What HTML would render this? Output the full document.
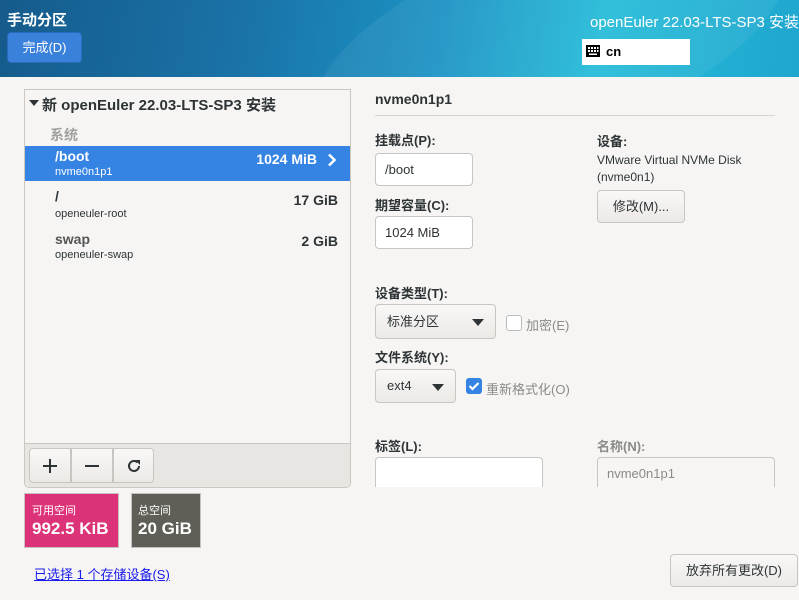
<!DOCTYPE html>
<html><head><meta charset="utf-8"><style>
*{box-sizing:border-box;margin:0;padding:0}
body{width:799px;height:600px;overflow:hidden;background:#f6f5f4;font-family:"Liberation Sans","Noto Sans CJK SC",sans-serif;color:#2e3436;position:relative;font-size:13px}
.a{position:absolute}
#hdr{left:0;top:0;width:799px;height:77px;background:linear-gradient(100deg,#155b8c 0%,#1a72a6 30%,#1c93c4 55%,#25bcd8 75%,#1fa6cf 100%);overflow:hidden}
.btn{position:absolute;border:1px solid #c9c5c0;border-radius:4px;background:linear-gradient(#f9f8f7,#ece9e6);font-size:13px;text-align:center;color:#2e3436}
.inp{position:absolute;border:1px solid #c9c5c0;border-radius:4px;background:#fff;font-size:13px;padding-left:9px}
.lbl{position:absolute;font-weight:bold;font-size:13px}
.tri{display:inline-block;width:0;height:0;border-left:6px solid transparent;border-right:6px solid transparent;border-top:7px solid #2e3436;position:absolute}
</style></head><body>
<div id="hdr" class="a">
  <div class="a" style="left:300px;top:-60px;width:500px;height:200px;border-radius:50%;background:rgba(255,255,255,0.06);transform:rotate(-20deg)"></div>
  <div class="a" style="left:7px;top:9px;color:#fff;font-weight:bold;font-size:15px">手动分区</div>
  <div class="a" style="left:7px;top:32px;width:75px;height:31px;background:#3a81db;border:1px solid #2a6bc0;border-radius:4px;color:#fff;font-size:13px;text-align:center;line-height:30px">完成(D)</div>
  <div class="a" style="right:0;top:11px;color:#fff;font-size:15px;white-space:nowrap">openEuler 22.03-LTS-SP3 安装</div>
  <div class="a" style="left:582px;top:39px;width:108px;height:26px;background:#fff">
    <svg class="a" style="left:4px;top:6px" width="14" height="12" viewBox="0 0 14 12"><rect x="0" y="0" width="14" height="12" fill="#000"/><g fill="#fff"><rect x="2" y="2" width="2" height="2"/><rect x="5" y="2" width="2" height="2"/><rect x="8" y="2" width="2" height="2"/><rect x="11" y="2" width="1.5" height="2"/><rect x="2" y="5" width="2" height="2"/><rect x="5" y="5" width="2" height="2"/><rect x="8" y="5" width="2" height="2"/><rect x="11" y="5" width="1.5" height="2"/><rect x="3" y="8.5" width="8" height="1.5"/></g></svg>
    <div class="a" style="left:24px;top:5px;font-weight:bold;font-size:13px;color:#000">cn</div>
  </div>
</div>

<div class="a" style="left:24px;top:89px;width:327px;height:399px;border:1px solid #cdc7c2;border-radius:0 0 5px 5px;background:#f6f5f4;overflow:hidden">
  <div class="tri" style="left:4px;top:10px;border-width:6px 5px 0 5px"></div>
  <div class="a" style="left:17px;top:4px;font-weight:bold;font-size:15px;white-space:nowrap">新 openEuler 22.03-LTS-SP3 安装</div>
  <div class="a" style="left:25px;top:35px;font-weight:bold;font-size:14px;color:#a0a09c">系统</div>
  <div class="a" style="left:0;top:56px;width:325px;height:35px;background:#3584e4;color:#fff">
    <div class="a" style="left:30px;top:2px;font-weight:bold;font-size:14px">/boot</div>
    <div class="a" style="left:30px;top:20px;font-size:11px">nvme0n1p1</div>
    <div class="a" style="right:33px;top:5px;font-weight:bold;font-size:14px">1024 MiB</div>
    <svg class="a" style="left:302px;top:7px" width="10" height="14" viewBox="0 0 10 14"><path d="M2 1.5 L7.5 7 L2 12.5" stroke="#fff" stroke-width="2.6" fill="none"/></svg>
  </div>
  <div class="a" style="left:30px;top:98px;font-weight:bold;font-size:14px">/</div>
  <div class="a" style="left:30px;top:118px;font-size:11px">openeuler-root</div>
  <div class="a" style="right:12px;top:102px;font-weight:bold;font-size:14px">17 GiB</div>
  <div class="a" style="left:30px;top:141px;font-weight:bold;font-size:14px;color:#555">swap</div>
  <div class="a" style="left:30px;top:159px;font-size:11px">openeuler-swap</div>
  <div class="a" style="right:12px;top:143px;font-weight:bold;font-size:14px">2 GiB</div>
  <div class="a" style="left:0;top:353px;width:325px;height:45px;background:#e8e6e3;border-top:1px solid #cdc7c2">
    <div class="btn" style="left:4px;top:4px;width:42px;height:35px;border-radius:4px 0 0 4px">
      <svg class="a" style="left:12px;top:9px" width="16" height="16"><path d="M8 1V15M1 8H15" stroke="#2e3436" stroke-width="2"/></svg></div>
    <div class="btn" style="left:46px;top:4px;width:42px;height:35px;border-radius:0">
      <svg class="a" style="left:12px;top:9px" width="16" height="16"><path d="M1 8H15" stroke="#2e3436" stroke-width="2"/></svg></div>
    <div class="btn" style="left:88px;top:4px;width:41px;height:35px;border-radius:0 4px 4px 0">
      <svg class="a" style="left:12px;top:9px" width="16" height="16" viewBox="0 0 16 16"><path d="M13 8A5 5 0 1 1 11.5 4.4" stroke="#2e3436" stroke-width="2" fill="none"/><path d="M9 2H14V7Z" fill="#2e3436"/></svg></div>
  </div>
</div>

<div class="a" style="left:24px;top:493px;width:95px;height:55px;background:#dc3278;border:1px solid #c8c0c0;color:#fff">
  <div class="a" style="left:7px;top:8px;font-size:11px">可用空间</div>
  <div class="a" style="left:7px;top:25px;font-size:17px;font-weight:bold;white-space:nowrap">992.5 KiB</div>
</div>
<div class="a" style="left:131px;top:493px;width:70px;height:55px;background:#5f5f58;border:1px solid #c8c0c0;color:#fff">
  <div class="a" style="left:6px;top:8px;font-size:11px">总空间</div>
  <div class="a" style="left:6px;top:25px;font-size:17px;font-weight:bold">20 GiB</div>
</div>
<div class="a" style="left:34px;top:564px;font-size:13px;color:#1a1aee;text-decoration:underline">已选择 1 个存储设备(S)</div>

<div class="a" style="left:375px;top:91px;font-weight:bold;font-size:14px">nvme0n1p1</div>
<div class="a" style="left:375px;top:115px;width:400px;height:1px;background:#d8d4d0"></div>
<div class="lbl" style="left:375px;top:130px">挂载点(P):</div>
<div class="inp" style="left:375px;top:153px;width:98px;height:33px;line-height:31px">/boot</div>
<div class="lbl" style="left:375px;top:195px">期望容量(C):</div>
<div class="inp" style="left:375px;top:216px;width:98px;height:33px;line-height:31px">1024 MiB</div>
<div class="lbl" style="left:597px;top:131px">设备:</div>
<div class="a" style="left:597px;top:153px;font-size:12px">VMware Virtual NVMe Disk</div>
<div class="a" style="left:597px;top:170px;font-size:12px">(nvme0n1)</div>
<div class="btn" style="left:597px;top:190px;width:88px;height:33px;line-height:31px">修改(M)...</div>

<div class="lbl" style="left:375px;top:283px">设备类型(T):</div>
<div class="btn" style="left:375px;top:304px;width:121px;height:35px;text-align:left;padding-left:11px;line-height:33px">标准分区<span class="tri" style="left:96px;top:14px"></span></div>
<div class="a" style="left:506px;top:315px;width:16px;height:16px;border:1px solid #bbb;border-radius:3px;background:#fff"></div>
<div class="a" style="left:526px;top:315px;font-size:13px;color:#8a8a86">加密(E)</div>
<div class="lbl" style="left:375px;top:347px">文件系统(Y):</div>
<div class="btn" style="left:375px;top:369px;width:81px;height:34px;text-align:left;padding-left:11px;line-height:32px">ext4<span class="tri" style="left:56px;top:14px"></span></div>
<div class="a" style="left:466px;top:378px;width:16px;height:16px;border-radius:3px;background:#3584e4">
  <svg class="a" style="left:2px;top:3px" width="12" height="10"><path d="M1.5 5L4.5 8L10.5 2" stroke="#fff" stroke-width="2.2" fill="none"/></svg></div>
<div class="a" style="left:486px;top:379px;font-size:13px;color:#8a8a86">重新格式化(O)</div>

<div class="lbl" style="left:375px;top:436px">标签(L):</div>
<div class="a" style="left:597px;top:436px;font-weight:bold;font-size:13px;color:#8a8a86">名称(N):</div>
<div class="a" style="left:360px;top:457px;width:430px;height:30px;overflow:hidden">
  <div class="inp" style="left:15px;top:0;width:168px;height:40px"></div>
  <div class="inp" style="left:237px;top:0;width:178px;height:40px;background:#f6f5f4;color:#8a8a86;line-height:31px">nvme0n1p1</div>
</div>
<div class="btn" style="left:670px;top:554px;width:128px;height:33px;line-height:31px">放弃所有更改(D)</div>
</body></html>
